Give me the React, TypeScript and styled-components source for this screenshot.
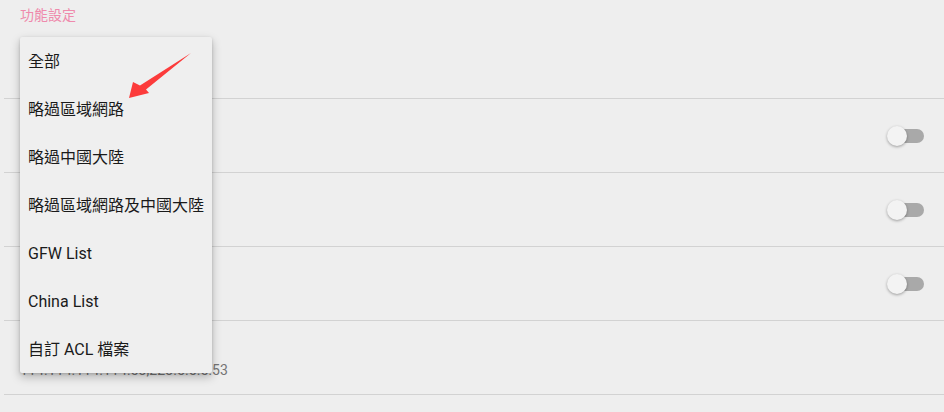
import styled, { createGlobalStyle } from "styled-components";

const Global = createGlobalStyle`
  html, body {
    margin: 0;
    padding: 0;
    background: #eeeeee;
  }
  body {
    font-family: Roboto, "Noto Sans CJK TC", "Noto Sans", sans-serif;
    color: #212121;
  }
`;

const Page = styled.main`
  position: relative;
  width: 944px;
  height: 412px;
  overflow: hidden;
  background: #eeeeee;
`;

const Category = styled.div`
  height: 30px;
  padding: 6px 0 0 20px;
  box-sizing: border-box;
  font-size: 14px;
  line-height: 18px;
  color: #ef8aac;
`;

const Row = styled.div<{ $h: number }>`
  height: ${p => p.$h}px;
  margin-left: 4px;
  padding: 0 20px 0 16px;
  border-bottom: 1px solid #d2d2d2;
  display: flex;
  align-items: center;
  justify-content: space-between;
`;

const Texts = styled.div`
  display: flex;
  flex-direction: column;
`;

const Title = styled.div`
  font-size: 16px;
  line-height: 24px;
  color: #212121;
`;

const Summary = styled.div`
  font-size: 14px;
  line-height: 20px;
  letter-spacing: 0.1px;
  color: #757575;
`;

const Switch = styled.div`
  position: relative;
  width: 37px;
  height: 20px;
  display: flex;
  align-items: center;
`;

const Track = styled.div`
  margin-left: 3px;
  width: 34px;
  height: 14px;
  border-radius: 7px;
  background: #a9a9a9;
`;

const Thumb = styled.div`
  position: absolute;
  left: 0;
  top: 0;
  width: 20px;
  height: 20px;
  border-radius: 50%;
  background: #f3f3f3;
  box-shadow: 0 1px 3px rgba(0, 0, 0, 0.35);
`;

const Menu = styled.ul`
  position: absolute;
  left: 20px;
  top: 37px;
  width: 192px;
  margin: 0;
  padding: 0;
  list-style: none;
  background: #efefef;
  border-radius: 2px;
  box-shadow: 0 4px 10px rgba(0, 0, 0, 0.25), 0 1px 3px rgba(0, 0, 0, 0.15);
`;

const Item = styled.li<{ $cjk?: boolean }>`
  height: 48px;
  padding-left: 8px;
  padding-bottom: ${p => (p.$cjk ? 3 : 0)}px;
  box-sizing: border-box;
  display: flex;
  align-items: center;
  font-size: 16px;
  color: #1a1a1a;
  white-space: nowrap;
`;

const Arrow = styled.svg`
  position: absolute;
  left: 0;
  top: 0;
  pointer-events: none;
`;

function Toggle() {
  return (
    <Switch>
      <Track />
      <Thumb />
    </Switch>
  );
}

const options = [
  "全部",
  "略過區域網路",
  "略過中國大陸",
  "略過區域網路及中國大陸",
  "GFW List",
  "China List",
  "自訂 ACL 檔案",
];

export default function App() {
  return (
    <Page>
      <Global />
      <Category>功能設定</Category>
      <Row $h={68}>
        <Texts>
          <Title>路由</Title>
          <Summary>略過區域網路</Summary>
        </Texts>
      </Row>
      <Row $h={73}>
        <Title>IPv6 路由</Title>
        <Toggle />
      </Row>
      <Row $h={73}>
        <Title>分應用代理</Title>
        <Toggle />
      </Row>
      <Row $h={73}>
        <Title>UDP 轉發</Title>
        <Toggle />
      </Row>
      <Row $h={73}>
        <Texts>
          <Title>遠端 DNS</Title>
          <Summary>114.114.114.114:53,223.5.5.5:53</Summary>
        </Texts>
      </Row>

      <Menu>
        {options.map(o => (
          <Item key={o} $cjk={/^[^A-Za-z]/.test(o)}>
            {o}
          </Item>
        ))}
      </Menu>

      <Arrow width="944" height="412" viewBox="0 0 944 412">
        <polygon
          points="129,98 133,82 140,85.5 191,53 146,89.5 149,93"
          fill="#fc3b3b"
        />
      </Arrow>
    </Page>
  );
}
